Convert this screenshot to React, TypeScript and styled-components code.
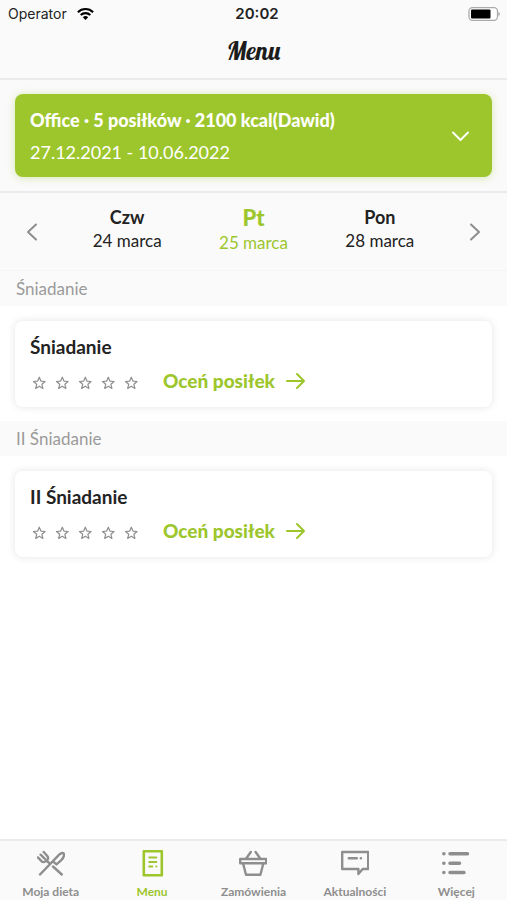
import React from "react";
import styled, { createGlobalStyle } from "styled-components";

const green = "#9dc62d";
const gray = "#8e8e8e";
const ink = "#222222";
const bar = "#fafafa";
const line = "#ebebeb";

const GlobalStyle = createGlobalStyle`
  * { box-sizing: border-box; }
  body { margin: 0; background: #fff; color: ${ink}; font-family: Lato, "Open Sans", sans-serif; }
  button { margin: 0; padding: 0; border: 0; background: none; font: inherit; color: inherit; cursor: pointer; }
  svg { display: block; flex: none; }
  h1, h2, h3, p { margin: 0; font: inherit; }
`;

const Page = styled.div`
  display: flex;
  flex-direction: column;
  min-height: 100vh;
`;

const Header = styled.header`
  background: ${bar};
  border-bottom: 2px solid ${line};
`;

const StatusBar = styled.div`
  display: grid;
  grid-template-columns: 1fr auto 1fr;
  align-items: center;
  height: 28px;
  padding: 0 7px 0 8px;
  font: 14px/20px Inter, sans-serif;
`;

const Carrier = styled.span`
  display: flex;
  align-items: center;
  gap: 10px;
`;

const Clock = styled.time`
  font-size: 15px;
  font-weight: 600;
  padding-left: 6px;
`;

const Battery = styled.span`
  justify-self: end;
`;

const Title = styled.h1`
  height: 50px;
  padding-top: 8px;
  text-align: center;
  font: 400 25px/30px Lobster, "Liberation Serif", serif;
  color: #1c1c1c;
`;

const PlanPanel = styled.section`
  padding: 14px 15px;
  background: ${bar};
  border-bottom: 2px solid ${line};
`;

const PlanButton = styled.button`
  display: flex;
  align-items: center;
  justify-content: space-between;
  width: 100%;
  padding: 10px 22px 9px 15px;
  border-radius: 8px;
  background: ${green};
  color: #fff;
  text-align: left;
  box-shadow: 0 1px 8px rgba(157, 198, 45, 0.35);
`;

const PlanText = styled.span`
  display: grid;
  font-size: 18px;
  line-height: 32px;
`;

const PlanName = styled.span`
  font-weight: 900;
`;

const Days = styled.nav`
  display: flex;
  align-items: center;
  height: 78px;
  background: ${bar};
  border-bottom: 1px solid #f4f4f4;
`;

const Step = styled.button`
  display: grid;
  place-items: center;
  width: 64px;
  height: 48px;
  color: ${gray};
`;

const DayList = styled.div`
  display: grid;
  grid-template-columns: repeat(3, 1fr);
  align-items: start;
  flex: 1;
  padding-bottom: 3px;
`;

const Day = styled.button<{ $active?: boolean }>`
  display: grid;
  font-size: 17px;
  line-height: 24px;
  color: ${(p) => (p.$active ? green : ink)};
`;

const DayName = styled.span<{ $active?: boolean }>`
  font-size: ${(p) => (p.$active ? "22px" : "18px")};
  line-height: ${(p) => (p.$active ? "26px" : "24px")};
  font-weight: ${(p) => (p.$active ? 900 : 700)};
`;

const Main = styled.main`
  flex: 1;
`;

const MealTitle = styled.h2`
  padding: 1px 16px 0;
  background: ${bar};
  color: #9a9a9a;
  font-size: 17px;
  line-height: 34px;
`;

const MealBody = styled.div`
  padding: 15px 15px 14px;
`;

const MealCard = styled.article`
  padding: 10px 15px 8px;
  border-radius: 8px;
  background: #fff;
  box-shadow: 0 0 8px rgba(0, 0, 0, 0.11);
`;

const MealName = styled.h3`
  font-size: 19px;
  line-height: 32px;
  font-weight: 700;
`;

const RateRow = styled.div`
  display: flex;
  align-items: center;
  gap: 23px;
  height: 36px;
`;

const Stars = styled.div`
  display: flex;
  gap: 5px;
  padding-top: 4px;
  color: ${gray};
`;

const RateButton = styled.button`
  display: flex;
  align-items: center;
  gap: 11px;
  color: ${green};
  font-size: 19px;
  line-height: 32px;
  font-weight: 900;
`;

const TabBar = styled.nav`
  position: sticky;
  bottom: 0;
  display: grid;
  grid-template-columns: repeat(5, 1fr);
  height: 61px;
  background: ${bar};
  border-top: 2px solid ${line};
`;

const Tab = styled.a<{ $active?: boolean }>`
  display: flex;
  flex-direction: column;
  align-items: center;
  padding-top: 8px;
  gap: 7px;
  color: ${(p) => (p.$active ? green : gray)};
  font-size: 12px;
  line-height: 16px;
  font-weight: 700;
  text-decoration: none;
`;

const Icon = ({ children, size = 28, stroke = 2 }: { children: React.ReactNode; size?: number; stroke?: number }) => (
  <svg width={size} height={size} viewBox={`0 0 ${size} ${size}`} fill="none" stroke="currentColor" strokeWidth={stroke} strokeLinecap="round" strokeLinejoin="round" aria-hidden="true">
    {children}
  </svg>
);

const WifiIcon = () => (
  <svg width="17" height="12" viewBox="0 0 17 12" fill="none" stroke="#000" strokeWidth="2.1" aria-hidden="true">
    <path d="M.9 4.2a10.8 10.8 0 0 1 15.2 0" />
    <path d="M3.7 7.1a6.8 6.8 0 0 1 9.6 0" />
    <path d="M8.5 12 5.8 9.2a3.9 3.9 0 0 1 5.4 0z" fill="#000" stroke="none" />
  </svg>
);

const BatteryIcon = () => (
  <svg width="32" height="14" viewBox="0 0 32 14" role="img" aria-label="Bateria">
    <rect x="1" y=".7" width="28.5" height="12.6" rx="3.5" fill="#fff" stroke="#aaa" strokeWidth="1.3" />
    <rect x="3" y="2.5" width="19.5" height="9" rx="1" />
    <path d="M30.5 5v4c1.6-.6 1.6-3.4 0-4z" fill="#999" />
  </svg>
);

const Star = () => (
  <Icon size={18} stroke={1.2}>
    <path d="M9.3 3.2l1.6 3.9 4.2.4-3.2 2.8 1 4.1-3.6-2.2-3.6 2.2 1-4.1-3.2-2.8 4.2-.4z" />
  </Icon>
);

const tabs = [
  {
    label: "Moja dieta",
    icon: (
      <Icon stroke={2.4}>
        <path d="M3 25.5 21 6.8c2-2 4.7-3.3 5.6-2.4s.4 4.2-2.3 6.8l-4.8 4.2-2.7-2.3M16 17.5l8.8 8M12.2 14l-2.6-2.3M.8 8.4l3.7 3.8c1.7 1.4 4 .7 5.2-.5s1.9-3.3.4-5L6.7 3M3.6 5.7l4.3 4.2" />
      </Icon>
    ),
  },
  {
    label: "Menu",
    active: true,
    icon: (
      <Icon stroke={2.6}>
        <path d="M5.8 2.3h18v24h-18z" />
        <path d="M11.3 8.5h7M11.3 13h7M11.3 17.5h3M18.3 17.5h.1" strokeWidth="2" />
      </Icon>
    ),
  },
  {
    label: "Zamówienia",
    icon: (
      <Icon stroke={2.4}>
        <path d="M1.2 10h26v4.2h-26zM4 14.2l3 11.5h14.4l3-11.5M6.8 10l5-7M21.6 10l-5-7" />
      </Icon>
    ),
  },
  {
    label: "Aktualności",
    icon: (
      <Icon stroke={2.4}>
        <path d="M1.2 3h26v17h-5.5L17.4 25v-5H1.2z" />
        <path d="M7.8 9.3h8M19.8 9.3h.2" />
      </Icon>
    ),
  },
  {
    label: "Więcej",
    icon: (
      <Icon stroke={3.5}>
        <path d="M8 4.8h17.5M8 14.2h9.5M8 23.6h14" />
        <path d="M1.8 4.8h.1M1.8 14.2h.1M1.8 23.6h.1" />
      </Icon>
    ),
  },
];

const days = [
  { name: "Czw", date: "24 marca" },
  { name: "Pt", date: "25 marca", active: true },
  { name: "Pon", date: "28 marca" },
];

const meals = ["Śniadanie", "II Śniadanie"];

const Meal = ({ name }: { name: string }) => (
  <section>
    <MealTitle>{name}</MealTitle>
    <MealBody>
      <MealCard>
        <MealName>{name}</MealName>
        <RateRow>
          <Stars role="img" aria-label="Ocena: 0 z 5">
            {[1, 2, 3, 4, 5].map((n) => (
              <Star key={n} />
            ))}
          </Stars>
          <RateButton type="button">
            Oceń posiłek
            <Icon size={20}>
              <path d="M1 10h17M11 3l7 7-7 7" />
            </Icon>
          </RateButton>
        </RateRow>
      </MealCard>
    </MealBody>
  </section>
);

export default function App() {
  return (
    <Page>
      <GlobalStyle />
      <Header>
        <StatusBar>
          <Carrier>
            Operator
            <WifiIcon />
          </Carrier>
          <Clock>20:02</Clock>
          <Battery>
            <BatteryIcon />
          </Battery>
        </StatusBar>
        <Title>Menu</Title>
      </Header>
      <PlanPanel>
        <PlanButton type="button">
          <PlanText>
            <PlanName>Office · 5 posiłków · 2100 kcal(Dawid)</PlanName>
            <span>27.12.2021 - 10.06.2022</span>
          </PlanText>
          <Icon size={20}>
            <path d="M3 6.5l7.5 7.5L18 6.5" />
          </Icon>
        </PlanButton>
      </PlanPanel>
      <Days aria-label="Dni">
        <Step type="button" aria-label="Poprzedni dzień">
          <Icon size={20}>
            <path d="M14 2.5L6 10l8 7.5" />
          </Icon>
        </Step>
        <DayList>
          {days.map((d) => (
            <Day key={d.name} type="button" $active={d.active}>
              <DayName $active={d.active}>{d.name}</DayName>
              <span>{d.date}</span>
            </Day>
          ))}
        </DayList>
        <Step type="button" aria-label="Następny dzień">
          <Icon size={20}>
            <path d="M6 2.5l8 7.5-8 7.5" />
          </Icon>
        </Step>
      </Days>
      <Main>
        {meals.map((m) => (
          <Meal key={m} name={m} />
        ))}
      </Main>
      <TabBar aria-label="Nawigacja">
        {tabs.map((t) => (
          <Tab key={t.label} href="#" $active={t.active} aria-current={t.active ? "page" : undefined}>
            {t.icon}
            {t.label}
          </Tab>
        ))}
      </TabBar>
    </Page>
  );
}
